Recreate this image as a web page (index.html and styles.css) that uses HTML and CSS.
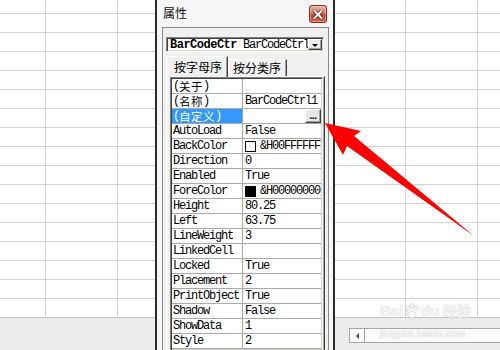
FILE: index.html
```html
<!DOCTYPE html>
<html>
<head>
<meta charset="utf-8">
<link rel="stylesheet" href="styles.css">
</head>
<body>
<div class="sheet"></div>
<div class="bottombar">
  <div class="hscroll">
    <div class="sbtn"><span class="tri-left"></span></div>
    <div class="track"></div>
  </div>
</div>

<div class="win">
  <div class="titlebar">
    <span class="title">属性</span>
    <div class="close">
      <svg width="10" height="9" viewBox="0 0 10 9"><path d="M1.5 1 L8.5 8 M8.5 1 L1.5 8" stroke="#5a1a10" stroke-width="3.4" stroke-linecap="square"/><path d="M1.5 1 L8.5 8 M8.5 1 L1.5 8" stroke="#fff" stroke-width="2" stroke-linecap="square"/></svg>
    </div>
  </div>
  <div class="frame">
    <div class="combo">
      <div class="cb-text"><b class="cb-bold">BarCodeCtr</b> <span class="cb-norm">BarCodeCtrl1</span></div>
      <div class="dd"><span class="tri-down"></span></div>
    </div>
    <div class="tabs">
      <div class="tab active">按字母序</div>
      <div class="tab">按分类序</div>
    </div>
    <div class="page">
      <div class="grid">
        <div class="row"><div class="name"><span>(</span><span class="cjk">关于</span><span>)</span></div><div class="val"></div></div>
        <div class="row"><div class="name"><span>(</span><span class="cjk">名称</span><span>)</span></div><div class="val">BarCodeCtrl1</div></div>
        <div class="row sel"><div class="name"><span>(</span><span class="cjk">自定义</span><span>)</span></div><div class="val btnval"><div class="ell">...</div></div></div>
        <div class="row"><div class="name">AutoLoad</div><div class="val">False</div></div>
        <div class="row"><div class="name">BackColor</div><div class="val"><span class="swatch"></span>&amp;H00FFFFFF</div></div>
        <div class="row"><div class="name">Direction</div><div class="val">0</div></div>
        <div class="row"><div class="name">Enabled</div><div class="val">True</div></div>
        <div class="row"><div class="name">ForeColor</div><div class="val"><span class="swatch black"></span>&amp;H00000000</div></div>
        <div class="row"><div class="name">Height</div><div class="val">80.25</div></div>
        <div class="row"><div class="name">Left</div><div class="val">63.75</div></div>
        <div class="row"><div class="name">LineWeight</div><div class="val">3</div></div>
        <div class="row"><div class="name">LinkedCell</div><div class="val"></div></div>
        <div class="row"><div class="name">Locked</div><div class="val">True</div></div>
        <div class="row"><div class="name">Placement</div><div class="val">2</div></div>
        <div class="row"><div class="name">PrintObject</div><div class="val">True</div></div>
        <div class="row"><div class="name">Shadow</div><div class="val">False</div></div>
        <div class="row"><div class="name">ShowData</div><div class="val">1</div></div>
        <div class="row"><div class="name">Style</div><div class="val">2</div></div>
      </div>
    </div>
  </div>
</div>

<svg class="pointer" width="500" height="350" viewBox="0 0 500 350">
  <polygon points="325,123 361,131 354,136 474,236 347,146 343,155" fill="#fe0000"/>
</svg>

<div class="wm">
  <div class="wm-logo">Bai<svg class="paw" width="16" height="16" viewBox="0 0 16 16"><g fill="rgba(255,255,255,0.8)" stroke="rgba(120,120,120,0.35)" stroke-width="0.8"><ellipse cx="4" cy="5" rx="1.8" ry="2.3"/><ellipse cx="8" cy="3" rx="1.8" ry="2.3"/><ellipse cx="12" cy="5" rx="1.8" ry="2.3"/><ellipse cx="2.5" cy="9.5" rx="1.6" ry="2"/><path d="M8 8 C5 8 3 12 4.5 14 C6 15.5 10 15.5 11.5 14 C13 12 11 8 8 8Z"/></g></svg>du<span class="wm-cn">经验</span></div>
  <div class="wm-url">jingyan.baidu.com</div>
</div>
</body>
</html>
```
FILE: styles.css
```css
* { box-sizing: border-box; }
html, body { margin: 0; padding: 0; }
body {
  width: 500px;
  height: 350px;
  overflow: hidden;
  position: relative;
  display: flex;
  flex-direction: column;
  background: #fff;
  font-family: "Liberation Mono", "Noto Sans CJK SC", monospace;
}

/* spreadsheet background */
.sheet {
  flex: 1;
  background-color: #fff;
  background-image:
    linear-gradient(to bottom, #d4d4d4 1px, transparent 1px),
    linear-gradient(to right, #d4d4d4 1px, transparent 1px);
  background-size: 100% 19px, 72px 100%;
  background-position: 0 13px, 45px 0;
}
.bottombar {
  height: 33px;
  border-top: 1px solid #c4c4c4;
  background: #ececec;
  padding: 10px 0 0 349px;
}
.hscroll {
  display: flex;
  height: 15px;
}
.sbtn {
  width: 16px;
  border: 1px solid #a6a6a6;
  background: #fbfbfb;
  display: flex;
  align-items: center;
  justify-content: center;
}
.tri-left {
  width: 0; height: 0;
  border-top: 3px solid transparent;
  border-bottom: 3px solid transparent;
  border-right: 3px solid #404040;
}
.track {
  flex: 1;
  border-top: 1px solid #a6a6a6;
  border-bottom: 1px solid #a6a6a6;
  background: #fafafa;
}

/* properties window */
.win {
  position: absolute;
  left: 155px;
  top: 0;
  width: 180px;
  height: 350px;
  border-left: 2px solid #2a2a2a;
  border-right: 2px solid #2a2a2a;
  background: #f6f6f6;
  display: flex;
  flex-direction: column;
  overflow: hidden;
}
.titlebar {
  height: 27px;
  flex: none;
  display: flex;
  justify-content: space-between;
  align-items: flex-start;
  padding: 5px 6px 0 6px;
}
.title {
  font-family: "Noto Sans CJK SC", sans-serif;
  font-size: 12px;
  line-height: 16px;
  color: #111;
}
.close {
  width: 18px;
  height: 18px;
  border: 1px solid #7b2c20;
  border-radius: 3px;
  background: linear-gradient(to bottom, #eab0a2 0%, #d9735f 45%, #c2432c 55%, #d0614a 100%);
  box-shadow: inset 0 0 0 1px rgba(255,255,255,0.35);
  display: flex;
  align-items: center;
  justify-content: center;
}
.frame {
  flex: 1;
  min-height: 0;
  margin: 0 4px -40px 5px;
  border: 1px solid #8a8a8a;
  background: #f0f0f0;
  padding: 9px 3px 0 3px;
  display: flex;
  flex-direction: column;
}
.combo {
  flex: none;
  height: 15px;
  margin-right: 1px;
  display: flex;
  align-items: center;
  background: #fff;
  border: 1px solid;
  border-color: #828282 #fff #fff #828282;
  box-shadow: inset 1px 1px #404040, inset -1px -1px #d4d0c8;
  padding: 0 1px 0 3px;
  font-size: 12px;
  line-height: 12px;
  color: #000;
}
.cb-text {
  flex: 1;
  overflow: hidden;
  white-space: nowrap;
  letter-spacing: -1.2px;
}
.cb-bold { font-weight: bold; letter-spacing: -0.5px; }
.dd {
  flex: none;
  width: 14px;
  height: 11px;
  background: #ececec;
  border: 1px solid;
  border-color: #fff #404040 #404040 #fff;
  box-shadow: inset -1px -1px #a0a0a0;
  display: flex;
  align-items: center;
  justify-content: center;
}
.tri-down {
  width: 0; height: 0;
  border-left: 3px solid transparent;
  border-right: 3px solid transparent;
  border-top: 3px solid #000;
  margin-top: 1px;
}
.tabs {
  flex: none;
  display: flex;
  align-items: flex-end;
  height: 20px;
  margin-top: 4px;
  position: relative;
  z-index: 1;
}
.tab {
  font-family: "Noto Sans CJK SC", sans-serif;
  font-size: 12px;
  line-height: 14px;
  color: #000;
  height: 17px;
  padding: 0 5px 0 4px;
  border: 1px solid;
  border-bottom: none;
  border-color: #fff #404040 transparent #fff;
  box-shadow: inset -1px 0 #a0a0a0;
  display: flex;
  align-items: center;
  background: #f0f0f0;
}
.tab.active {
  height: 21px;
  margin-bottom: -1px;
  padding: 0 5px 0 7px;
}
.page {
  flex: 1;
  min-height: 0;
  border-top: 1px solid #fff;
  border-left: 1px solid #fff;
  border-right: 1px solid #404040;
  box-shadow: inset -1px 0 #a0a0a0;
  padding: 0 1px 0 3px;
  overflow: hidden;
}
.grid {
  width: 153px;
  border: 1px solid;
  border-color: #808080 #fff #fff #808080;
  box-shadow: inset 1px 1px #404040, inset -1px -1px #d4d0c8;
  padding: 1px;
  background: #fff;
}
.row {
  display: grid;
  grid-template-columns: 71px 78px;
  height: 15px;
  border-bottom: 1px solid #a9a9a9;
  font-size: 12px;
  line-height: 14px;
  color: #000;
}
.name {
  border-right: 1px solid #a9a9a9;
  padding-left: 1px;
  white-space: nowrap;
  letter-spacing: -1.2px;
  display: flex;
  align-items: center;
  height: 14px;
}
.val {
  padding-left: 2px;
  white-space: nowrap;
  overflow: hidden;
  letter-spacing: -1.2px;
  display: flex;
  align-items: center;
  height: 14px;
}
.cjk {
  font-family: "Noto Sans CJK SC", sans-serif;
  font-size: 11.5px;
  letter-spacing: 0.5px;
  line-height: 13px;
  display: block;
}
.row.sel .name {
  background: #3399ff;
  color: #fff;
}
.btnval { justify-content: flex-end; padding: 0; }
.ell {
  width: 16px;
  height: 14px;
  background: #e6e6e6;
  border: 1px solid;
  border-color: #fff #404040 #404040 #fff;
  box-shadow: inset -1px -1px #a0a0a0;
  font-family: "Liberation Sans", sans-serif;
  font-weight: bold;
  font-size: 10px;
  line-height: 12px;
  letter-spacing: -0.5px;
  text-align: center;
  color: #000;
}
.swatch {
  width: 11px;
  height: 11px;
  border: 1px solid #000;
  background: #fff;
  margin-right: 4px;
  flex: none;
}
.swatch.black { background: #000; }

/* red pointer arrow */
.pointer {
  position: absolute;
  left: 0;
  top: 0;
  pointer-events: none;
}

/* watermark */
.wm {
  position: absolute;
  left: 380px;
  top: 302px;
  color: rgba(255,255,255,0.85);
  text-shadow: 0 0 1px rgba(90,90,90,0.45);
  pointer-events: none;
}
.wm-logo {
  display: flex;
  align-items: center;
  font-family: "Liberation Sans", sans-serif;
  font-weight: bold;
  font-size: 15px;
  line-height: 17px;
}
.paw { margin: 0 1px; }
.wm-cn {
  font-family: "Noto Sans CJK SC", sans-serif;
  font-size: 14px;
  margin-left: 3px;
}
.wm-url {
  font-family: "Liberation Sans", sans-serif;
  font-size: 10px;
  line-height: 12px;
  margin-top: 9px;
  letter-spacing: 0.3px;
}
```
